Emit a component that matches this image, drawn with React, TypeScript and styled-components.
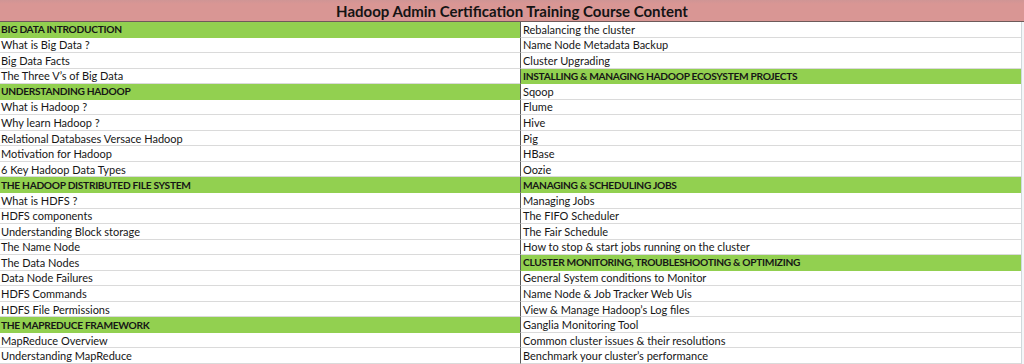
import { createGlobalStyle, styled } from "styled-components";

const GlobalStyle = createGlobalStyle`
  html, body {
    margin: 0;
    padding: 0;
    background: #ffffff;
  }
  body {
    font-family: Lato, "Liberation Sans", sans-serif;
    color: #161616;
  }
`;

const Sheet = styled.div`
  width: 1024px;
  height: 364px;
  display: grid;
  grid-template-rows: 22px 1fr;
  overflow: hidden;
`;

const TitleBar = styled.div`
  background: linear-gradient(#cf9595 0, #d99694 4px, #d99694 100%);
  border-bottom: 1px solid #6e5a5a;
  display: flex;
  align-items: center;
  justify-content: center;
  font-size: 15px;
  font-weight: 700;
  color: #141414;
`;

const Body = styled.div`
  display: grid;
  grid-template-columns: 520px 501px 3px;
  grid-template-rows: repeat(22, 1fr);
  grid-auto-flow: column;
`;

const Cell = styled.div<{ $head?: boolean; $right?: boolean }>`
  display: flex;
  align-items: center;
  padding-left: ${(p) => (p.$right ? "2px" : "1px")};
  font-size: ${(p) => (p.$head ? "10.2px" : "11px")};
  letter-spacing: ${(p) => (p.$head ? "-0.3px" : "0")};
  font-weight: ${(p) => (p.$head ? 700 : 400)};
  background: ${(p) => (p.$head ? "#92d050" : "#ffffff")};
  border-bottom: 1px solid ${(p) => (p.$head ? "#92d050" : "#dadada")};
  border-left: ${(p) => (p.$right ? "1px solid #5a5a5a" : "none")};
  white-space: nowrap;
  overflow: hidden;
  line-height: 1;
`;

const Edge = styled.div`
  grid-row: 1 / -1;
  border-left: 1px solid #cfd8dc;
  background: #f3f6f8;
`;

type Row = { text: string; head?: boolean };

const left: Row[] = [
  { text: "BIG DATA INTRODUCTION", head: true },
  { text: "What is Big Data ?" },
  { text: "Big Data Facts" },
  { text: "The Three V’s of Big Data" },
  { text: "UNDERSTANDING HADOOP", head: true },
  { text: "What is Hadoop ?" },
  { text: "Why learn Hadoop ?" },
  { text: "Relational Databases Versace Hadoop" },
  { text: "Motivation for Hadoop" },
  { text: "6 Key Hadoop Data Types" },
  { text: "THE HADOOP DISTRIBUTED FILE SYSTEM", head: true },
  { text: "What is HDFS ?" },
  { text: "HDFS components" },
  { text: "Understanding Block storage" },
  { text: "The Name Node" },
  { text: "The Data Nodes" },
  { text: "Data Node Failures" },
  { text: "HDFS Commands" },
  { text: "HDFS File Permissions" },
  { text: "THE MAPREDUCE FRAMEWORK", head: true },
  { text: "MapReduce Overview" },
  { text: "Understanding MapReduce" },
];

const right: Row[] = [
  { text: "Rebalancing the cluster" },
  { text: "Name Node Metadata Backup" },
  { text: "Cluster Upgrading" },
  { text: "INSTALLING & MANAGING HADOOP ECOSYSTEM PROJECTS", head: true },
  { text: "Sqoop" },
  { text: "Flume" },
  { text: "Hive" },
  { text: "Pig" },
  { text: "HBase" },
  { text: "Oozie" },
  { text: "MANAGING & SCHEDULING JOBS", head: true },
  { text: "Managing Jobs" },
  { text: "The FIFO Scheduler" },
  { text: "The Fair Schedule" },
  { text: "How to stop & start jobs running on the cluster" },
  { text: "CLUSTER MONITORING, TROUBLESHOOTING & OPTIMIZING", head: true },
  { text: "General System conditions to Monitor" },
  { text: "Name Node & Job Tracker Web Uis" },
  { text: "View & Manage Hadoop’s Log files" },
  { text: "Ganglia Monitoring Tool" },
  { text: "Common cluster issues & their resolutions" },
  { text: "Benchmark your cluster’s performance" },
];

export default function App() {
  return (
    <>
      <GlobalStyle />
      <Sheet>
        <TitleBar>Hadoop Admin Certification Training Course Content</TitleBar>
        <Body>
          {left.map((r, i) => (
            <Cell key={"l" + i} $head={r.head}>
              {r.text}
            </Cell>
          ))}
          {right.map((r, i) => (
            <Cell key={"r" + i} $head={r.head} $right>
              {r.text}
            </Cell>
          ))}
          <Edge />
        </Body>
      </Sheet>
    </>
  );
}
